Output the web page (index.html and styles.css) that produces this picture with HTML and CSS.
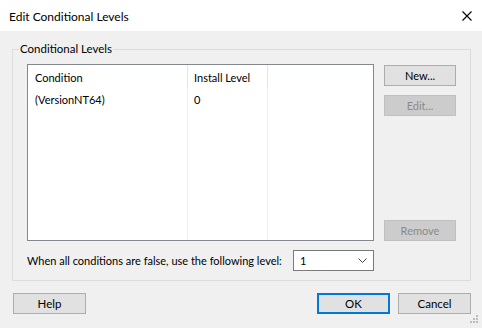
FILE: index.html
```html
<!DOCTYPE html>
<html lang="en">

<head>
  <meta charset="UTF-8">
  <meta name="viewport" content="width=device-width, initial-scale=1.0">
  <title>Edit Conditional Levels</title>

  <link rel="stylesheet" href="styles.css">
</head>

<body>
  <div class="dialog">
    <div class="titlebar">
      <span class="title">Edit Conditional Levels</span>
      <svg class="close" width="10" height="10" viewBox="0 0 10 10">
        <path d="M0.5 0.5 L9.5 9.5 M9.5 0.5 L0.5 9.5" stroke="#000" stroke-width="1.1" fill="none" />
      </svg>
    </div>

    <fieldset class="group">
      <legend>Conditional Levels</legend>
      <div class="group-row">
        <div class="listview">
          <div class="col col-1">
            <div class="col-head">Condition</div>
            <div class="col-body">
              <div class="cell">(VersionNT64)</div>
            </div>
          </div>
          <div class="col col-2">
            <div class="col-head">Install Level</div>
            <div class="col-body">
              <div class="cell">0</div>
            </div>
          </div>
          <div class="col col-3">
            <div class="col-head"></div>
            <div class="col-body"></div>
          </div>
        </div>
        <div class="side-buttons">
          <button class="btn">New...</button>
          <button class="btn" disabled>Edit...</button>
          <button class="btn btn-bottom" disabled>Remove</button>
        </div>
      </div>
      <div class="level-row">
        <span>When all conditions are false, use the following level:</span>
        <div class="combo">
          <span>1</span>
          <svg width="9" height="5" viewBox="0 0 9 5">
            <path d="M0.5 0.5 L4.5 4.5 L8.5 0.5" stroke="#444" stroke-width="1" fill="none" />
          </svg>
        </div>
      </div>
    </fieldset>

    <div class="footer">
      <button class="btn btn-wide">Help</button>
      <div class="footer-right">
        <button class="btn btn-wide btn-default">OK</button>
        <button class="btn btn-wide">Cancel</button>
      </div>
    </div>

    <!-- resize grip -->
    <svg class="grip" width="10" height="10" viewBox="0 0 10 10">
      <rect x="7" y="0" width="2" height="2" fill="#bcbcbc" />
      <rect x="4" y="3" width="2" height="2" fill="#bcbcbc" />
      <rect x="7" y="3" width="2" height="2" fill="#bcbcbc" />
      <rect x="1" y="6" width="2" height="2" fill="#bcbcbc" />
      <rect x="4" y="6" width="2" height="2" fill="#bcbcbc" />
      <rect x="7" y="6" width="2" height="2" fill="#bcbcbc" />
    </svg>
  </div>
</body>

</html>
```

FILE: styles.css
```css
body {
  margin: 0;
  background: #f0f0f0;
  font-family: "Segoe UI", Lato, sans-serif;
  font-size: 11px;
  color: #000;
}

.dialog {
  position: relative;
  width: 482px;
  height: 328px;
  display: flex;
  flex-direction: column;
}

/* 标题栏 */
.titlebar {
  height: 31px;
  background: #fff;
  display: flex;
  align-items: center;
  justify-content: space-between;
  padding: 0 10px 0 9px;
  flex-shrink: 0;
}

.title {
  font-size: 12px;
  margin-top: 1px;
}

/* 分组框 */
.group {
  margin: 10px 11px 0 12px;
  padding: 7px 14px 9px 14px;
  border: 1px solid #dcdcdc;
  min-width: 0;
}

.group legend {
  padding: 0 1px;
  margin-left: -8px;
  line-height: 16px;
  font-size: 11.5px;
}

.group-row {
  display: flex;
  gap: 10px;
}

/* 列表 */
.listview {
  width: 347px;
  height: 177px;
  box-sizing: border-box;
  border: 1px solid #828790;
  background: #fff;
  display: flex;
}

.col {
  display: flex;
  flex-direction: column;
}

.col-1 {
  width: 160px;
}

.col-2 {
  width: 80px;
}

.col-3 {
  flex: 1;
}

.col-head {
  height: 22px;
  line-height: 22px;
  padding: 2px 0 0 7px;
  border-right: 1px solid #e5e5e5;
  flex-shrink: 0;
}

.col-2 .col-head,
.col-2 .cell {
  padding-left: 6px;
}

.col-body {
  flex: 1;
  border-right: 1px solid #eaf1fb;
}

.col-3 .col-head,
.col-3 .col-body {
  border-right: none;
}

.cell {
  height: 20px;
  line-height: 21px;
  padding-left: 7px;
}

/* 按钮 */
.side-buttons {
  display: flex;
  flex-direction: column;
  gap: 9px;
  padding-top: 1px;
}

.btn {
  width: 72px;
  height: 21px;
  padding: 0;
  font: inherit;
  color: #000;
  background: #e1e1e1;
  border: 1px solid #adadad;
}

.btn:disabled {
  background: #cccccc;
  border-color: #bfbfbf;
  color: #8a8a8a;
}

.btn-bottom {
  margin-top: auto;
}

.btn-wide {
  width: 73px;
  font-size: 11.5px;
}

.btn-default {
  border: 2px solid #0078d7;
}

.level-row {
  width: 347px;
  margin-top: 9px;
  display: flex;
  align-items: center;
  justify-content: space-between;
  white-space: nowrap;
}

.combo {
  width: 81px;
  height: 21px;
  box-sizing: border-box;
  border: 1px solid #7a7a7a;
  background: #fff;
  display: flex;
  align-items: center;
  justify-content: space-between;
  padding: 0 6px 0 6px;
}

.footer {
  margin-top: 12px;
  padding: 0 11px 0 13px;
  display: flex;
  justify-content: space-between;
}

.footer-right {
  display: flex;
  gap: 8px;
}

.grip {
  position: absolute;
  right: 3px;
  bottom: 3px;
}
```
